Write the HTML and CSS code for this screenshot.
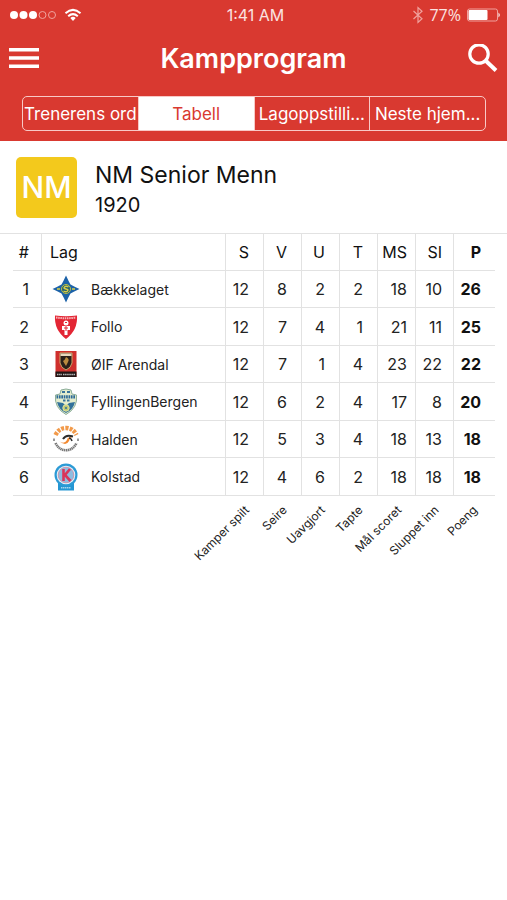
FILE: index.html
```html
<!DOCTYPE html>
<html lang="no">

	<head>
		<meta charset="UTF-8">
		<meta name="viewport" content="width=device-width, initial-scale=1">
		<title>Kampprogram</title>
		<link rel="stylesheet" href="styles.css">
	</head>

	<body>
		<header class="top">
			<div class="status">
				<div class="status-left">
					<svg width="47" height="10" viewBox="0 0 47 10">
						<g fill="#fff">
							<circle cx="4" cy="5" r="4" />
							<circle cx="13.5" cy="5" r="4" />
							<circle cx="23" cy="5" r="4" />
						</g>
						<g fill="none" stroke="#f0a29d">
							<circle cx="32.5" cy="5" r="3.5" />
							<circle cx="42" cy="5" r="3.5" />
						</g>
					</svg>
					<svg width="18" height="14" viewBox="0 0 18 14" fill="none" stroke="#fff" stroke-width="2">
						<path d="M1.5 5.2Q9-1.4 16.500 5.200M4.200 8.200Q9 4 13.800 8.200" />
						<path d="M6.300 9.900Q9 7.700 11.700 9.900L9 13z" fill="#fff" stroke="none" />
					</svg>
				</div>
				<span class="time">1:41 AM</span>
				<div class="status-right">
					<svg width="10" height="18" viewBox="0 0 10 18" fill="none" stroke="#f0a29d" stroke-width="1.200">
						<path d="M.5 5L9 12.800 5 16.500V1.500L9 5.200.5 13" />
					</svg>
					<span class="percent">77%</span>
					<svg width="34" height="14" viewBox="0 0 34 14">
						<rect x=".5" y="1" width="30" height="12" rx="2" fill="none" stroke="#f0a29d" />
						<rect x="1.500" y="2" width="19" height="10" rx="1" fill="#fff" />
						<path d="M31.500 4.500Q34 7 31.500 9.500z" fill="#fff" />
					</svg>
				</div>
			</div>

			<div class="bar">
				<button type="button" class="icon-btn" aria-label="Meny">
					<svg width="30" height="22" viewBox="0 0 30 22" fill="#fff">
						<path d="M0 0h30v3.500H0zM0 8.200h30v3.500H0zM0 16.400h30v3.500H0z" />
					</svg>
				</button>
				<h1>Kampprogram</h1>
				<button type="button" class="icon-btn" aria-label="Søk">
					<svg width="30" height="30" viewBox="0 0 30 30" fill="none" stroke="#fff">
						<circle cx="11" cy="10" r="9.200" stroke-width="3.200" />
						<path d="M17.500 16.500L28 26.500" stroke-width="4" />
					</svg>
				</button>
			</div>

			<nav class="tabs">
				<button type="button" class="tab">Trenerens ord</button>
				<button type="button" class="tab active">Tabell</button>
				<button type="button" class="tab">Lagoppstilli...</button>
				<button type="button" class="tab">Neste hjem...</button>
			</nav>
		</header>

		<main>
			<section class="league">
				<div class="badge">NM</div>
				<div class="league-text">
					<h2>NM Senior Menn</h2>
					<p>1920</p>
				</div>
			</section>

			<div class="table-wrap">
				<table>
					<thead>
						<tr>
							<th class="rank">#</th>
							<th class="team">Lag</th>
							<th>S</th>
							<th>V</th>
							<th>U</th>
							<th>T</th>
							<th class="scored">MS</th>
							<th class="conceded">SI</th>
							<th class="points">P</th>
						</tr>
					</thead>
					<tbody>
						<tr>
							<td class="rank">1</td>
							<td class="team">
								<div class="club">
									<svg width="28" height="28" viewBox="0 0 28 28">
										<path d="M14 .5Q16.500 6 18.500 9.500 22 11.500 27.500 14 22 16.500 18.500 18.500 16.500 22 14 27.500 11.500 22 9.500 18.500 6 16.500.5 14 6 11.500 9.500 9.500 11.500 6 14 .5z" fill="#1c62a8" />
										<circle cx="14" cy="14" r="4.500" fill="#24606f" stroke="#b8bd4b" />
										<path d="M16.500 12Q14 10.500 12.500 12T14 14 15.500 16 11.500 16M5 14h3M20 14h3" fill="none" stroke="#d9cf45" stroke-width="1.400" />
									</svg>
									Bækkelaget
								</div>
							</td>
							<td>12</td>
							<td>8</td>
							<td>2</td>
							<td>2</td>
							<td class="scored">18</td>
							<td class="conceded">10</td>
							<td class="points">26</td>
						</tr>
						<tr>
							<td class="rank">2</td>
							<td class="team">
								<div class="club">
									<svg width="28" height="28" viewBox="0 0 28 28">
										<path d="M3 2.500Q14 4 25 2.500 26 17 14 26 2 17 3 2.500z" fill="#e32634" />
										<path d="M4 4.500Q14 6 24 4.500" fill="none" stroke="#f7b6b8" stroke-width="2" stroke-dasharray="1.500 .7" />
										<circle cx="14" cy="10" r="2.500" fill="#fff" />
										<path d="M10 13h8v4h-2.500v5h-3v-5H10z" fill="#fff" />
										<path d="M13 9.500h2M14 13v5M12 15h4" stroke="#e32634" />
									</svg>
									Follo
								</div>
							</td>
							<td>12</td>
							<td>7</td>
							<td>4</td>
							<td>1</td>
							<td class="scored">21</td>
							<td class="conceded">11</td>
							<td class="points">25</td>
						</tr>
						<tr>
							<td class="rank">3</td>
							<td class="team">
								<div class="club">
									<svg width="28" height="28" viewBox="0 0 28 28">
										<rect x="3.500" y="1" width="21" height="26" fill="#cf302d" />
										<rect x="3.500" y="21.500" width="21" height="5.500" fill="#221514" />
										<path d="M8 3h12v10q-1 5-6 7-5-2-6-7z" fill="#29201a" stroke="#cda568" />
										<path d="M8.500 3.500h11v2.500h-11z" fill="#e8d9be" />
										<path d="M14 7q4 2 2 5l-2 4q-2-3-3-5 2-1 3-4z" fill="#b98a3e" />
										<path d="M5 24.500h5M11 24.500h12" stroke="#bbb" stroke-width="1.500" stroke-dasharray="1.500 .6" />
									</svg>
									ØIF Arendal
								</div>
							</td>
							<td>12</td>
							<td>7</td>
							<td>1</td>
							<td>4</td>
							<td class="scored">23</td>
							<td class="conceded">22</td>
							<td class="points">22</td>
						</tr>
						<tr>
							<td class="rank">4</td>
							<td class="team">
								<div class="club">
									<svg width="28" height="28" viewBox="0 0 28 28">
										<path d="M9 2Q14 0 19 2l1 4 4.500 1Q26 20 14 26.500 2 20 3.500 7L8 6z" fill="#e4edce" stroke="#8bad9a" />
										<path d="M5 14l6 1 3 3 3-3 6-1Q21 22 14 25 7 22 5 14z" fill="#31719b" />
										<path d="M4.500 8.800h19" stroke="#2d6a98" stroke-width="3.200" stroke-dasharray="1.700 .7" />
										<path d="M10 4h3M15 4h3M11 12.500h2.500M15 12.500h2.500" stroke="#3a759b" stroke-width="2" />
										<circle cx="14" cy="20" r="3.200" fill="#bec873" stroke="#e4e4a0" />
										<circle cx="14" cy="20" r="1" fill="#31719b" />
									</svg>
									FyllingenBergen
								</div>
							</td>
							<td>12</td>
							<td>6</td>
							<td>2</td>
							<td>4</td>
							<td class="scored">17</td>
							<td class="conceded">8</td>
							<td class="points">20</td>
						</tr>
						<tr>
							<td class="rank">5</td>
							<td class="team">
								<div class="club">
									<svg width="28" height="28" viewBox="0 0 28 28" fill="none">
										<path d="M3.500 10Q7 3 14 3t10.500 7" stroke="#f29a4a" stroke-width="4.500" stroke-dasharray="3 1.200" />
										<path d="M3.500 18Q7 25.200 14 25.200T24.500 18" stroke="#777" stroke-width="2.600" stroke-dasharray="1.400 .5" />
										<path d="M2 13.500v2.500M26 13.500v2.500" stroke="#777" stroke-width="1.500" />
										<path d="M7 16q5 4 8-1 0-3 5-3-3 2-3 4-3 6-10 0z" fill="#f28a32" />
										<path d="M11 14q3-5 10-2.500" stroke="#2b2b2b" stroke-width="2" />
										<path d="M17 13q2 0 3 3" stroke="#2b2b2b" stroke-width="1.500" />
									</svg>
									Halden
								</div>
							</td>
							<td>12</td>
							<td>5</td>
							<td>3</td>
							<td>4</td>
							<td class="scored">18</td>
							<td class="conceded">13</td>
							<td class="points">18</td>
						</tr>
						<tr>
							<td class="rank">6</td>
							<td class="team">
								<div class="club">
									<svg width="28" height="28" viewBox="0 0 28 28">
										<path d="M6 19h16v8.500H6z" fill="#2496d3" />
										<circle cx="14" cy="12" r="11.500" fill="#2b9ad5" />
										<circle cx="14" cy="12" r="9.300" fill="#e4eef7" />
										<circle cx="14" cy="12" r="7.800" fill="#8fbce0" stroke="#c98da5" stroke-width=".8" />
										<path d="M11.500 6v12M18 6l-5 6 5.500 6" fill="none" stroke="#d8355b" stroke-width="2.600" />
										<path d="M9 24.800h10" stroke="#a6d5ec" stroke-width="1.500" stroke-dasharray="1.400 .5" />
									</svg>
									Kolstad
								</div>
							</td>
							<td>12</td>
							<td>4</td>
							<td>6</td>
							<td>2</td>
							<td class="scored">18</td>
							<td class="conceded">18</td>
							<td class="points">18</td>
						</tr>
					</tbody>
				</table>

				<!-- forklaring til kolonnene -->
				<ul class="legend">
					<li><span>Kamper spilt</span></li>
					<li><span>Seire</span></li>
					<li><span>Uavgjort</span></li>
					<li><span>Tapte</span></li>
					<li><span>Mål scoret</span></li>
					<li><span>Sluppet inn</span></li>
					<li><span>Poeng</span></li>
				</ul>
			</div>
		</main>
	</body>

</html>
```
FILE: styles.css
```css
* {
	box-sizing: border-box;
}

body,
h1,
h2,
p,
ul {
	margin: 0;
	padding: 0;
}

body {
	background-color: #fff;
	color: #111;
	font-family: Inter, "Liberation Sans", sans-serif;
}

button {
	margin: 0;
	padding: 0;
	border: 0;
	background: none;
	font-family: inherit;
	cursor: pointer;
}

svg {
	display: block;
	flex: none;
}

.top {
	padding-bottom: 10px;
	background-color: #d93930;
	color: #fff;
}

/* statuslinje */
.status {
	display: grid;
	grid-template-columns: 1fr auto 1fr;
	align-items: center;
	height: 30px;
	padding: 0 6px 0 10px;
}

.status-left,
.status-right {
	display: flex;
	align-items: center;
	gap: 7px;
}

.status-right {
	justify-content: flex-end;
	gap: 6px;
}

.time {
	color: #fbe3e1;
	font-size: 16px;
}

.percent {
	color: #fbe3e1;
	font-family: "Open Sans", sans-serif;
	font-size: 16px;
}

.bar {
	display: flex;
	justify-content: space-between;
	align-items: center;
	height: 58px;
	padding: 0 9px;
}

.bar h1 {
	font-size: 27px;
	font-weight: 600;
	line-height: 32px;
}

.icon-btn {
	width: 30px;
}

/* faner */
.tabs {
	display: flex;
	height: 35px;
	margin: 8px 21px 0 22px;
	border: 1px solid #f8c9c6;
	border-radius: 5px;
	overflow: hidden;
}

.tab {
	flex: 1 1 0;
	min-width: 0;
	color: #fff;
	font-size: 17px;
	white-space: nowrap;
}

.tab + .tab {
	border-left: 1px solid #f8c9c6;
}

.tab.active {
	background-color: #fff;
	color: #d93930;
}

.league {
	display: flex;
	align-items: center;
	gap: 18px;
	height: 92px;
	padding: 0 16px;
}

.badge {
	width: 61px;
	height: 61px;
	border-radius: 5px;
	background-color: #f3c91c;
	color: #fff;
	font-size: 30px;
	font-weight: 500;
	line-height: 61px;
	text-align: center;
}

.league-text {
	padding-top: 4px;
}

.league h2 {
	font-size: 23px;
	font-weight: 400;
	line-height: 32px;
}

.league p {
	font-size: 20px;
	line-height: 28px;
}

/* tabell */
.table-wrap {
	padding: 0 12px 0 13px;
	border-top: 1px solid #e2e2e2;
}

table {
	width: 100%;
	border-collapse: separate;
	border-spacing: 0;
	table-layout: fixed;
	font-size: 16px;
}

th,
td {
	width: 38px;
	height: 37px;
	padding: 0 14px 0 0;
	border-right: 1px solid #e2e2e2;
	border-bottom: 1px solid #e2e2e2;
	font-weight: 400;
	text-align: right;
	white-space: nowrap;
}

td {
	color: #222;
}

tr:nth-child(even) td {
	height: 38px;
}

.rank {
	width: 29px;
	padding-right: 12px;
}

.team {
	width: auto;
	padding: 0 0 0 8px;
	text-align: left;
}

.scored {
	padding-right: 8px;
}

.conceded {
	padding-right: 11px;
}

.points {
	width: 41px;
	border-right: 0;
	color: #111;
	font-weight: 700;
}

.club {
	display: flex;
	align-items: center;
	gap: 11px;
	padding-left: 2px;
	font-size: 14px;
}

.legend {
	display: flex;
	justify-content: flex-end;
	height: 72px;
	padding: 7px 25px 0 0;
	list-style: none;
}

.legend li {
	display: flex;
	justify-content: flex-end;
	width: 38px;
}

.legend span {
	align-self: flex-start;
	color: #222;
	font-size: 12px;
	line-height: 14px;
	white-space: nowrap;
	transform: rotate(-45deg);
	transform-origin: top right;
}
```
